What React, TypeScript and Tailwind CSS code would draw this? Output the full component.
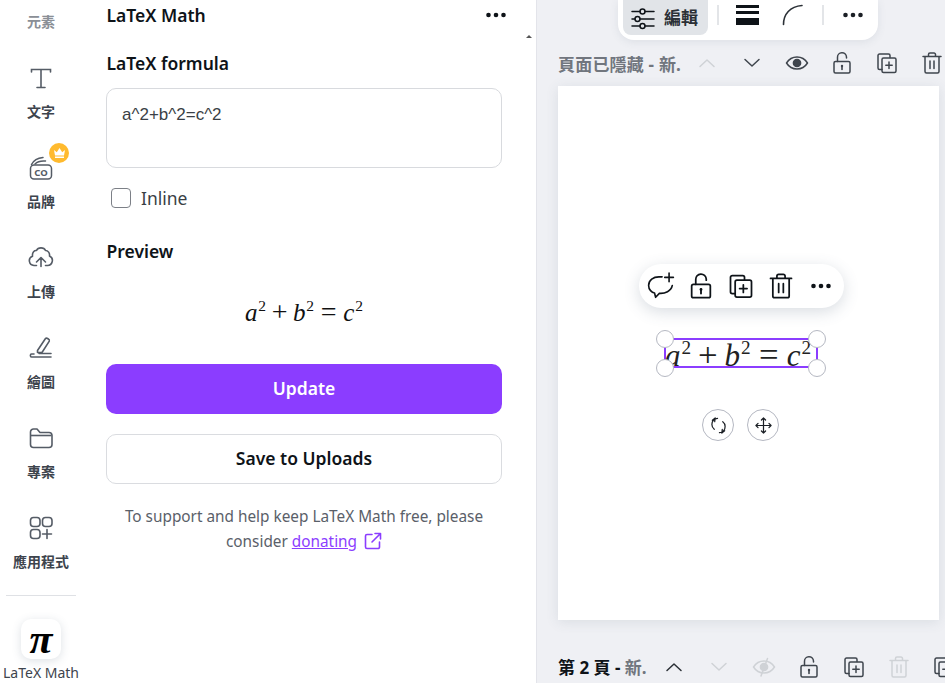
import React from "react";

const FONT = "font-['Noto_Sans','Noto_Sans_CJK_TC',sans-serif]";
type P = { className?: string; size?: number };
const S = ({ className, children, size = 24 }: P & { children: React.ReactNode }) => (
  <svg width={size} height={size} viewBox="0 0 24 24" fill="none" stroke="currentColor" strokeWidth={1.5} strokeLinecap="round" strokeLinejoin="round" className={className}>
    {children}
  </svg>
);
const Dots = ({ className }: P) => (
  <svg width={24} height={24} viewBox="0 0 24 24" className={className} fill="currentColor"><circle cx="4.500" cy="12" r="2.300" /><circle cx="12" cy="12" r="2.300" /><circle cx="19.500" cy="12" r="2.300" /></svg>
);
const Lock = ({ className, size }: P) => (
  <S className={className} size={size}><path d="M7.500 10.500V6.500a4.500 4.500 0 0 1 9-.5v1" /><rect x="4" y="10.500" width="16" height="11.500" rx="1.500" /><path d="M12 15v3.500" strokeWidth={1.600} /><circle cx="12" cy="15" r="1.200" fill="currentColor" stroke="none" /></S>
);
const CopyPlus = ({ className, size }: P) => (
  <S className={className} size={size}><path d="M7 18.500H4.500A1.500 1.500 0 0 1 3 17V4.500A1.500 1.500 0 0 1 4.500 3h9A1.500 1.500 0 0 1 15 4.500V6.500" /><rect x="7" y="7" width="14" height="14.500" rx="1.500" /><path d="M14 11v6.500M10.800 14.200h6.400" /></S>
);
const Trash = ({ className, size }: P) => (
  <S className={className} size={size}><path d="M3 5.500h18M8.500 5.500V3.500A1.500 1.500 0 0 1 10 2h4a1.500 1.500 0 0 1 1.500 1.500v2M5 5.500v15A1.500 1.500 0 0 0 6.500 22h11a1.500 1.500 0 0 0 1.500-1.500v-15M10 10v7.500M14 10v7.500" /></S>
);
const ChevUp = ({ className }: P) => <S className={className}><path d="M5 15.500l7-6.500 7 6.500" /></S>;
const ChevDown = ({ className }: P) => <S className={className}><path d="M5 8.500l7 6.500 7-6.500" /></S>;
const Eye = ({ className }: P) => (
  <S className={className}><path d="M1.500 12C4 8 7.700 6 12 6s8 2 10.500 6c-2.500 4-6.200 6-10.500 6s-8-2-10.500-6z" /><circle cx="12" cy="12" r="3.600" fill="currentColor" /></S>
);
const EyeOff = ({ className }: P) => (
  <S className={className}><path d="M1.500 12C4 8 7.700 6 12 6s8 2 10.500 6c-2.500 4-6.200 6-10.500 6s-8-2-10.500-6z" /><circle cx="12" cy="12" r="3.600" fill="currentColor" /><path d="M15.500 3.500L9 21" /></S>
);

const Rail = ({ icon, label }: { icon?: React.ReactNode; label: string }) => (
  <div className="flex flex-col items-center h-[90px]">
    <div className="h-[46px] mt-[11px] flex items-center justify-center text-[#555c66] relative">{icon}</div>
    <div className="mt-[1px] text-[14px] leading-[20px] font-bold text-[#3d444d]">{label}</div>
  </div>
);

const IconRow = ({ title, items }: { title: React.ReactNode; items: React.ReactNode[] }) => (
  <div className="flex items-center h-[24px] whitespace-nowrap">
    <div className="text-[17px] font-bold leading-[24px] shrink-0">{title}</div>
    <div className="flex shrink-0 ml-[4px]">{items.map((it, i) => <div key={i} className="w-[45px] flex justify-center">{it}</div>)}</div>
  </div>
);

const Op = ({ children, className }: P & { children: React.ReactNode }) => <span className={`text-[1.12em] leading-none ${className}`}>{children}</span>;
const Sup = () => <sup className="text-[0.62em] top-[-0.62em] ml-[0.05em]">2</sup>;
const MathText = ({ className }: P) => (
  <span className={`font-['Liberation_Serif',serif] whitespace-nowrap ${className}`}>
    <i>a</i><Sup /><Op className="mx-[0.2em]">+</Op><i>b</i><Sup /><Op className="mx-[0.24em]">=</Op><i>c</i><Sup />
  </span>
);

const Handle = ({ className }: P) => <div className={`absolute w-[18px] h-[18px] rounded-full bg-white border border-[#b5b8c2] ${className}`} />;

export default function App() {
  return (
    <div className={`${FONT} w-[945px] h-[683px] overflow-hidden flex bg-white text-[#0e1318]`}>
      {/* rail */}
      <aside className="w-[82px] shrink-0 flex flex-col items-center">
        <div className="h-[44px] flex items-end justify-center w-full pb-[12px] text-[14px] leading-[20px] font-bold text-[#8a8f96]">元素</div>
        <div>
          <Rail label="文字" icon={
            <svg width="24" height="24" viewBox="0 0 24 24" fill="none" stroke="#555c66" strokeWidth="1.600" strokeLinecap="round"><path d="M2.500 6V3.500h19V6M12 3.500V21.500M8 21.500h8" /></svg>
          } />
          <Rail label="品牌" icon={
            <>
              <svg width="26" height="26" viewBox="0 0 26 26" fill="none" stroke="#555c66" strokeWidth="1.500" strokeLinecap="round"><rect x="2.500" y="10" width="21" height="14" rx="3.500" /><path d="M3.500 9.500C5.500 5.500 10 3 15 2.500M7 9c2-2 5.500-3.500 10.500-3" /><text x="13" y="20.500" textAnchor="middle" fontSize="9.500" fontWeight="700" stroke="none" fill="#555c66" fontFamily="Noto Sans">CO</text></svg>
              <span className="absolute left-[21px] top-[-2px] w-[20px] h-[20px] rounded-full bg-[#ffba2e] flex items-center justify-center">
                <svg width="13" height="12" viewBox="0 0 13 12" fill="#fff"><path d="M1 3l2.800 2.200L6.500 1l2.700 4.200L12 3l-1 5.500H2zM2 9.500h9V11H2z" /></svg>
              </span>
            </>
          } />
          <Rail label="上傳" icon={
            <svg width="26" height="24" viewBox="0 0 26 24" fill="none" stroke="#555c66" strokeWidth="1.600" strokeLinecap="round" strokeLinejoin="round" className="-mt-[2px]"><path d="M8.500 20.500H6a4.800 4.800 0 0 1-1.500-9.300C4 7 6.500 5.200 8.500 5.500 10 2 16 2 17.500 5.500c2.500 0 4.500 2.500 4 5.500a5 5 0 0 1-2.500 9.500h-1.500" /><path d="M13 21.500v-8.500M8.500 17L13 12.500l4.500 4.500" /></svg>
          } />
          <Rail label="繪圖" icon={
            <svg width="26" height="26" viewBox="0 0 26 26" fill="none" stroke="#555c66" strokeWidth="1.600" strokeLinecap="round" strokeLinejoin="round"><path d="M9.500 15.500L17.500 3.500c1-1.200 4.500 1 3.800 2.600L14 17.500H9.500z" /><path d="M6 19H3.500c-1.500 0-1.500 3 0 3H23M11 18.500h12" /></svg>
          } />
          <Rail label="專案" icon={
            <svg width="24" height="24" viewBox="0 0 24 24" fill="none" stroke="#555c66" strokeWidth="1.600" strokeLinejoin="round"><path d="M1.500 6A3 3 0 0 1 4.500 3H8l3 3.500h9A3 3 0 0 1 23 9.500v9a3 3 0 0 1-3 3H4.500a3 3 0 0 1-3-3z" /><path d="M1.500 9.500h21" /></svg>
          } />
          <Rail label="應用程式" icon={
            <svg width="24" height="24" viewBox="0 0 24 24" fill="none" stroke="#555c66" strokeWidth="1.600" strokeLinecap="round"><rect x="1.500" y="1.500" width="9.500" height="9" rx="3" /><rect x="13.500" y="1.500" width="9.500" height="9" rx="3" /><rect x="1.500" y="13.500" width="9.500" height="9" rx="3" /><path d="M18 13.500v9M13.500 18h9" /></svg>
          } />
        </div>
        <div className="w-[70px] h-px bg-[#dfe1e5] mt-[11px]" />
        <div className="mt-[23px] w-[40px] h-[40px] rounded-[10px] bg-white shadow-[0_2px_10px_rgba(64,87,109,0.18)] flex items-center justify-center font-['Liberation_Serif',serif] italic font-bold text-[42px] leading-none text-black">π</div>
        <div className="mt-[5px] text-[14px] leading-[18px] whitespace-nowrap text-[#3d444d]">LaTeX Math</div>
      </aside>

      {/* panel */}
      <section className="w-[454px] shrink-0 pl-[24px] pr-[34px] relative">
        <div className="flex items-center justify-between h-[30px]">
          <h1 className="text-[17.500px] font-semibold leading-[30px] ml-[0.500px]">LaTeX Math</h1>
          <Dots className="text-[#0e1318] -mr-[6px]" />
        </div>
        <div className="absolute left-[444px] top-[35px] w-0 h-0 border-x-[3px] border-x-transparent border-b-[3px] border-b-[#555]" />
        <h2 className="mt-[21px] text-[17.500px] font-semibold leading-[24px] ml-[0.500px]">LaTeX formula</h2>
        <textarea readOnly defaultValue="a^2+b^2=c^2" className="mt-[13px] block w-full h-[80px] resize-none rounded-[10px] border border-[#d8dade] px-[15px] py-[14px] text-[17px] leading-[24px] font-['Liberation_Sans',sans-serif] text-[#3a3f45] outline-none" />
        <label className="mt-[20px] flex items-center h-[20px] pl-[5px]">
          <span className="w-[20px] h-[20px] rounded-[4px] border border-[#7c8087] bg-white" />
          <span className="ml-[10px] text-[17.500px] leading-[20px] text-[#3a3f45]">Inline</span>
        </label>
        <h2 className="mt-[31px] text-[17.500px] font-semibold leading-[24px] ml-[0.500px]">Preview</h2>
        <div className="mt-[30px] h-[40px] flex justify-center items-center text-[25px] leading-[40px] text-[#111]">
          <MathText />
        </div>
        <button className="mt-[31px] block w-full h-[50px] pb-[2px] rounded-[10px] bg-[#8b3dff] text-white text-[17.500px] font-semibold">Update</button>
        <button className="mt-[20px] block w-full h-[50px] pb-[2px] rounded-[10px] bg-white border border-[#dadce0] text-[17.500px] font-semibold text-[#0e1318]">Save to Uploads</button>
        <p className="mt-[20px] text-center text-[15.350px] leading-[25px] text-[#5a6069]">
          To support and help keep LaTeX Math free, please<br />
          consider <span className="text-[#8b3dff] underline">donating</span>
          <svg width="18" height="18" viewBox="0 0 18 18" fill="none" stroke="#8b3dff" strokeWidth="1.600" strokeLinecap="round" strokeLinejoin="round" className="inline ml-[7px] -mt-[3px]"><path d="M8 2.500H3A1.500 1.500 0 0 0 1.500 4v11A1.500 1.500 0 0 0 3 16.500h11a1.500 1.500 0 0 0 1.500-1.500v-5M8 10l8.500-8.500M11 1.500h5.500V7" /></svg>
        </p>
      </section>

      {/* canvas */}
      <main className="flex-1 relative bg-[#eff0f4] border-l border-[#e3e4ea] pl-[21px] overflow-hidden">
        <div className="absolute left-[81px] top-0 w-[260px] h-[40px] bg-white rounded-b-[16px] shadow-[0_2px_8px_rgba(64,87,109,0.1)] flex items-center pl-[5px]">
          <div className="w-[85px] h-[35px] -mt-[5px] rounded-b-[8px] bg-[#e1e4e8] flex items-center pl-[8px]">
            <svg width="24" height="24" viewBox="0 0 24 24" fill="none" stroke="#0e1318" strokeWidth="1.500" strokeLinecap="round"><path d="M1 5.500h8M14 5.500h9M1 13h3M9 13h14M1 20h8M14 20h9" /><circle cx="11.500" cy="5.500" r="2.500" /><circle cx="6.500" cy="13" r="2.500" /><circle cx="11.500" cy="20" r="2.500" /></svg>
            <span className="ml-[9px] text-[17px] font-bold text-[#2b3036] leading-none">編輯</span>
          </div>
          <div className="w-[2px] h-[20px] bg-[#e3e5e8] ml-[9px] -mt-[10px]" />
          <div className="ml-[17px] w-[23px] h-[20px] -mt-[10px] flex flex-col justify-between">
            <div className="h-[3px] bg-[#0e1318]" /><div className="h-[3px] bg-[#0e1318] -mt-[1px]" /><div className="h-[7px] bg-[#0e1318]" />
          </div>
          <svg width="22" height="22" viewBox="0 0 22 22" fill="none" stroke="#2b3036" strokeWidth="1.600" strokeLinecap="round" className="ml-[23px] -mt-[10px]"><path d="M1.500 20.500C1.500 10 8 2.500 20 1.500" /></svg>
          <div className="w-[2px] h-[20px] bg-[#e3e5e8] ml-[18px] -mt-[10px]" />
          <Dots className="ml-[17px] -mt-[10px] text-[#1b1f25]" />
        </div>

        <div className="pt-[51px]">
          <IconRow
            title={<span className="inline-block w-[122px] translate-y-[2px] text-[#71767e] tracking-[0.2px]">頁面已隱藏 - 新.</span>}
            items={[<ChevUp key="a" className="text-[#cfd2d6]" />, <ChevDown key="b" className="text-[#3f454d]" />, <Eye key="c" className="text-[#3f454d]" />, <Lock key="d" className="text-[#3f454d]" />, <CopyPlus key="e" className="text-[#3f454d]" />, <Trash key="f" className="text-[#3f454d]" />]}
          />
        </div>
        <div className="relative mt-[11px] w-[381px] h-[534px] bg-white shadow-[0_2px_12px_rgba(64,87,109,0.12)]">
          {/* floating menu */}
          <div className="absolute left-[81px] top-[178px] w-[205px] h-[44px] rounded-full bg-white shadow-[0_4px_16px_rgba(64,87,109,0.2)] flex items-center pl-[2px] text-[#0e1318]">
            <div className="w-[40px] flex justify-center">
              <svg width="28" height="28" viewBox="0 0 26 26" fill="none" stroke="#0e1318" strokeWidth="1.500" strokeLinecap="round" strokeLinejoin="round"><path d="M14 4.500H11C6 4.500 1.500 7.500 1.500 12.500c0 4 3 6.500 5.500 7l1 4 3.500-3.700c5 .5 11-2 12-7.300" /><path d="M20.500 1v8M16.500 5h8" /></svg>
            </div>
            <div className="w-[40px] flex justify-center"><Lock size={28} /></div>
            <div className="w-[40px] flex justify-center"><CopyPlus size={28} /></div>
            <div className="w-[40px] flex justify-center"><Trash size={28} /></div>
            <div className="w-[40px] flex justify-center"><Dots /></div>
          </div>
          {/* selection */}
          <div className="absolute left-[106px] top-[252px] w-[154px] h-[30px] border-2 border-[#8b3dff] flex items-center">
            <MathText className="text-[31px] leading-[28px] ml-[-1px] pt-[4px] text-[#222]" />
          </div>
          <Handle className="left-[98px] top-[244px]" />
          <Handle className="left-[250px] top-[244px]" />
          <Handle className="left-[98px] top-[273px]" />
          <Handle className="left-[250px] top-[273px]" />
          {/* rotate/move */}
          <div className="absolute left-[144px] top-[323px] w-[32px] h-[32px] rounded-full bg-white border border-[#b5b8c2] flex items-center justify-center">
            <svg width="17" height="17" viewBox="0 0 18 18" fill="none" stroke="#1b1f25" strokeWidth="1.300" strokeLinecap="round" strokeLinejoin="round"><path d="M8 1.500C4.500 2 2 4.700 2 8c0 2 .8 3.700 2.500 5M2.500 3.500L5.500 1M5 5L5.500 1M10 16.500c3.500-.5 6-3.200 6-6.500 0-2-.8-3.700-2.500-5M15.500 14.500l-3 2.500M13 13l-.5 4" /></svg>
          </div>
          <div className="absolute left-[189px] top-[323px] w-[32px] h-[32px] rounded-full bg-white border border-[#b5b8c2] flex items-center justify-center">
            <svg width="17" height="17" viewBox="0 0 18 18" fill="none" stroke="#1b1f25" strokeWidth="1.300" strokeLinecap="round" strokeLinejoin="round"><path d="M9 1v16M1 9h16M6.800 3.200L9 1l2.200 2.200M6.800 14.800L9 17l2.200-2.200M3.200 6.800L1 9l2.200 2.200M14.800 6.800L17 9l-2.200 2.200" /></svg>
          </div>
        </div>
        <div className="mt-[35px]">
          <IconRow
            title={<span className="inline-block w-[89px] translate-y-[1px]">第 2 頁 - <span className="text-[#71767e]">新.</span></span>}
            items={[<ChevUp key="a" className="text-[#2b3036]" />, <ChevDown key="b" className="text-[#cfd2d6]" />, <EyeOff key="c" className="text-[#cfd2d6]" />, <Lock key="d" className="text-[#3f454d]" />, <CopyPlus key="e" className="text-[#3f454d]" />, <Trash key="f" className="text-[#cfd2d6]" />, <CopyPlus key="g" className="text-[#3f454d]" />]}
          />
        </div>
      </main>
    </div>
  );
}
